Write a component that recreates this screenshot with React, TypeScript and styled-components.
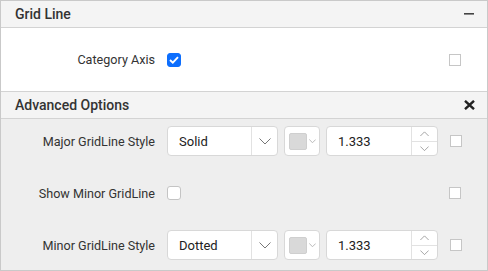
import React from 'react';
import styled, { createGlobalStyle } from 'styled-components';

const GlobalStyle = createGlobalStyle`
  html, body {
    margin: 0;
    padding: 0;
    background: #fff;
  }
  * {
    box-sizing: border-box;
  }
`;

const Panel = styled.div`
  width: 488px;
  height: 271px;
  border: 1px solid #c9c9c9;
  display: flex;
  flex-direction: column;
  font-family: Roboto, 'Liberation Sans', sans-serif;
  color: #333;
  overflow: hidden;
`;

const Header = styled.div`
  height: 27px;
  flex-shrink: 0;
  background: #f4f4f4;
  border-bottom: 1px solid #d3d3d3;
  display: flex;
  align-items: center;
  justify-content: space-between;
  padding: 0 12px 0 14px;
  font-size: 14px;
  font-weight: 500;
  color: #333;
`;

const Section = styled.div<{ $gray?: boolean }>`
  background: ${(p) => (p.$gray ? '#eeeeee' : '#fff')};
  display: flex;
  flex-direction: column;
  gap: 22px;
  justify-content: ${(p) => (p.$gray ? 'flex-start' : 'center')};
  padding: ${(p) => (p.$gray ? '7px 0 0' : '0')};
  height: ${(p) => (p.$gray ? 'auto' : '64px')};
  flex: ${(p) => (p.$gray ? '1' : 'none')};
  border-bottom: ${(p) => (p.$gray ? 'none' : '1px solid #d3d3d3')};
`;

const Row = styled.div`
  display: grid;
  grid-template-columns: 154px 1fr 12px;
  column-gap: 12px;
  align-items: center;
  height: 30px;
  padding-right: 26px;
`;

const Label = styled.div`
  text-align: right;
  font-size: 12.6px;
  color: #333;
  white-space: nowrap;
`;

const Controls = styled.div`
  display: flex;
  align-items: center;
  gap: 6px;
`;

const Check = styled.div<{ $checked?: boolean }>`
  width: 14px;
  height: 14px;
  border-radius: 3px;
  background: ${(p) => (p.$checked ? '#0d6efd' : '#fff')};
  border: 1px solid ${(p) => (p.$checked ? '#0d6efd' : '#c4c4c4')};
  display: flex;
  align-items: center;
  justify-content: center;
`;

const SmallCheck = styled.div`
  width: 12px;
  height: 12px;
  background: #fff;
  border: 1px solid #c6c6c6;
`;

const Box = styled.div<{ $w: number }>`
  width: ${(p) => p.$w}px;
  height: 30px;
  background: #fff;
  border: 1px solid #d8d8d8;
  border-radius: 4px;
  display: flex;
  align-items: stretch;
  font-size: 13px;
  color: #222;
`;

const Value = styled.div`
  flex: 1;
  display: flex;
  align-items: center;
  padding-left: 11px;
`;

const Arrow = styled.div`
  width: 26px;
  border-left: 1px solid #e2e2e2;
  display: flex;
  align-items: center;
  justify-content: center;
`;

const Spinner = styled.div`
  width: 26px;
  border-left: 1px solid #e2e2e2;
  display: flex;
  flex-direction: column;
`;

const SpinHalf = styled.div<{ $top?: boolean }>`
  flex: 1;
  display: flex;
  align-items: center;
  justify-content: center;
  border-bottom: ${(p) => (p.$top ? '1px solid #e2e2e2' : 'none')};
`;

const ColorBtn = styled.div`
  display: flex;
  align-items: center;
  gap: 2px;
  padding-left: 4px;
`;

const Swatch = styled.div`
  width: 18px;
  height: 17px;
  background: #d9d9d9;
  border: 1px solid #cfcfcf;
  border-radius: 2px;
`;

const Chevron = ({ size = 12, up = false, color = '#777' }: { size?: number; up?: boolean; color?: string }) => (
  <svg width={size} height={size / 2 + 1} viewBox="0 0 12 7" fill="none">
    <path d={up ? 'M0.5 6.5 L6 1 L11.5 6.5' : 'M0.5 0.5 L6 6 L11.5 0.5'} stroke={color} strokeWidth="1" />
  </svg>
);

const Select = ({ value }: { value: string }) => (
  <Box $w={111}>
    <Value>{value}</Value>
    <Arrow>
      <Chevron size={12} />
    </Arrow>
  </Box>
);

const ColorPicker = () => (
  <Box $w={36}>
    <ColorBtn>
      <Swatch />
      <Chevron size={7} color="#888" />
    </ColorBtn>
  </Box>
);

const Numeric = ({ value }: { value: string }) => (
  <Box $w={112}>
    <Value>{value}</Value>
    <Spinner>
      <SpinHalf $top>
        <Chevron size={9} up color="#888" />
      </SpinHalf>
      <SpinHalf>
        <Chevron size={9} color="#888" />
      </SpinHalf>
    </Spinner>
  </Box>
);

const StyleRow = ({ label, value }: { label: string; value: string }) => (
  <Row>
    <Label>{label}</Label>
    <Controls>
      <Select value={value} />
      <ColorPicker />
      <Numeric value="1.333" />
    </Controls>
    <SmallCheck />
  </Row>
);

function App() {
  return (
    <>
      <GlobalStyle />
      <Panel>
        <Header>
          Grid Line
          <svg width="11" height="4" viewBox="0 0 11 4">
            <rect x="0" y="1" width="10" height="1.6" fill="#444" />
          </svg>
        </Header>
        <Section>
          <Row>
            <Label>Category Axis</Label>
            <Controls>
              <Check $checked>
                <svg width="10" height="8" viewBox="0 0 10 8" fill="none">
                  <path d="M1 4 L3.8 6.6 L9 1.2" stroke="#fff" strokeWidth="1.9" />
                </svg>
              </Check>
            </Controls>
            <SmallCheck />
          </Row>
        </Section>
        <Header>
          Advanced Options
          <svg width="11" height="10" viewBox="0 0 11 10">
            <path d="M1 0.8 L10 9.2 M10 0.8 L1 9.2" stroke="#222" strokeWidth="2.4" />
          </svg>
        </Header>
        <Section $gray>
          <StyleRow label="Major GridLine Style" value="Solid" />
          <Row>
            <Label>Show Minor GridLine</Label>
            <Controls>
              <Check />
            </Controls>
            <SmallCheck />
          </Row>
          <StyleRow label="Minor GridLine Style" value="Dotted" />
        </Section>
      </Panel>
    </>
  );
}

export default App;
